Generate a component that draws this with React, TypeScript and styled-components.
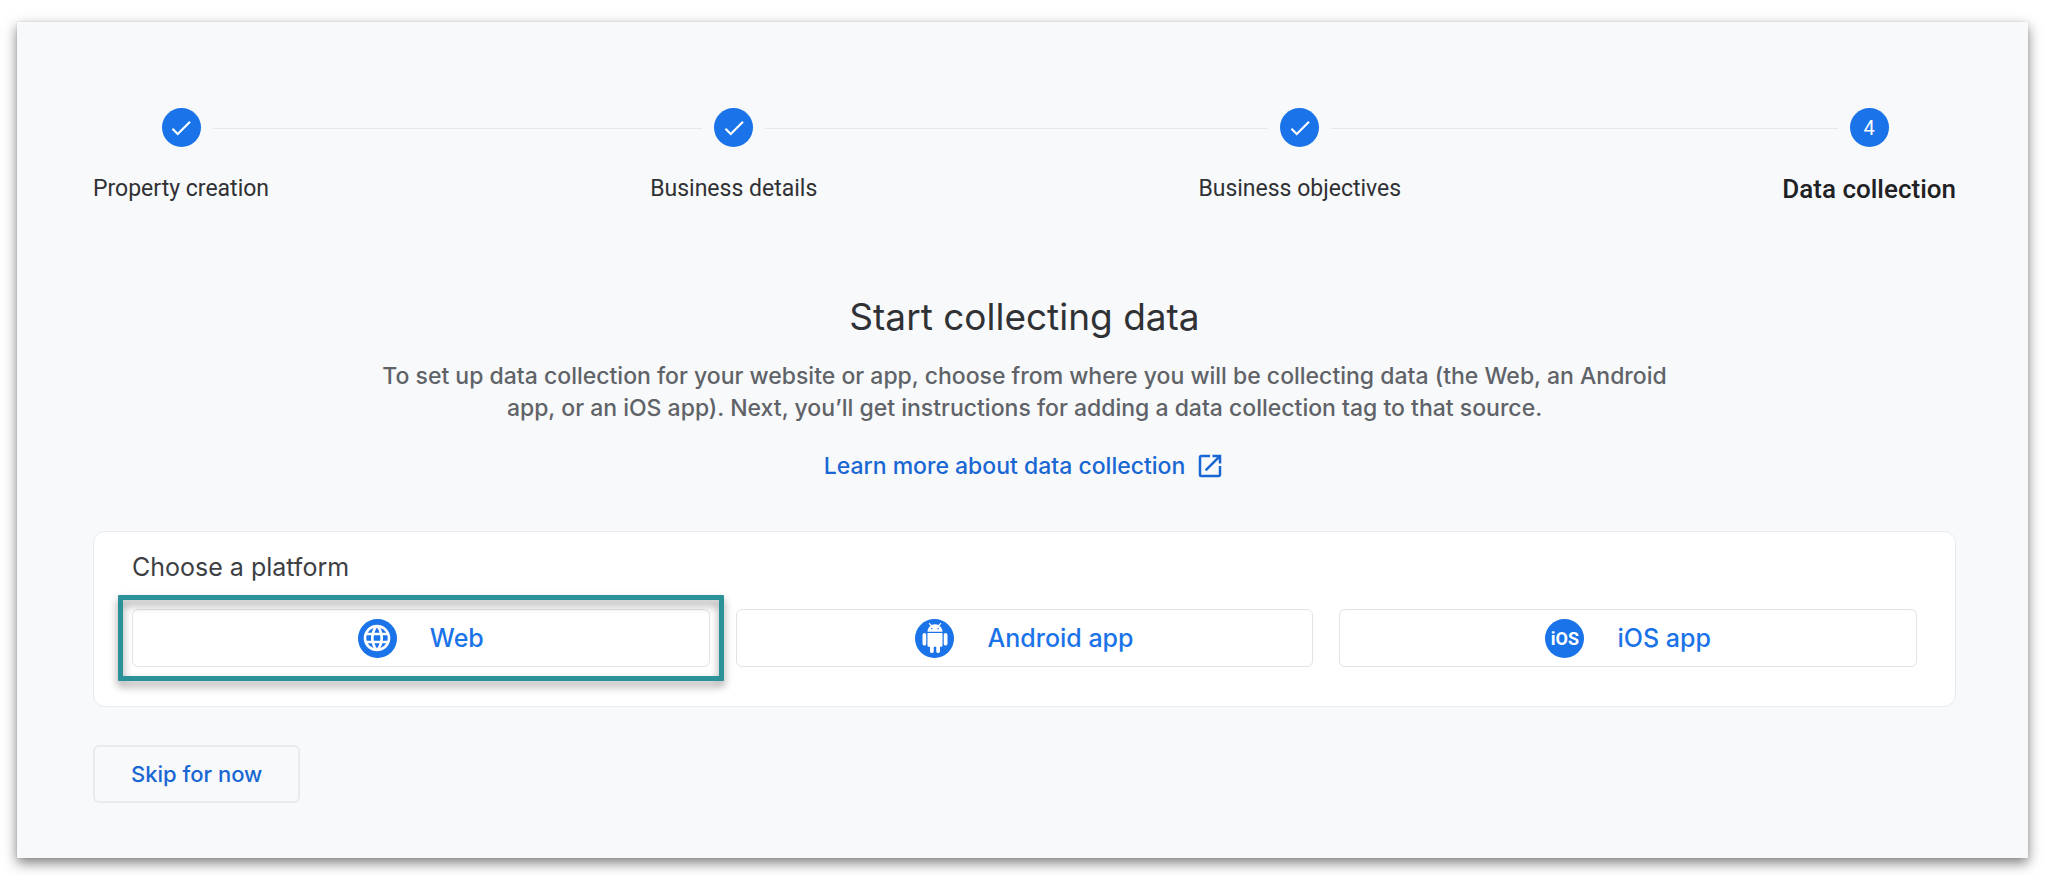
import React from 'react';
import styled, { createGlobalStyle } from 'styled-components';
import { MdCheck, MdLanguage, MdOpenInNew } from 'react-icons/md';

const GlobalStyle = createGlobalStyle`
  *, *::before, *::after { box-sizing: border-box; }
  body {
    margin: 0;
    background: #ffffff;
    font-family: Inter, "Liberation Sans", sans-serif;
  }
  h1, h2, p, ol { margin: 0; padding: 0; font-weight: 400; }
  button { font-family: inherit; cursor: pointer; }
`;

const Panel = styled.main`
  margin: 22px 18px 18px 17px;
  padding: 86px 72px 55px 76px;
  background: #f8f9fb;
  box-shadow: 0 5px 12px rgba(0, 0, 0, 0.5), 0 0 2px rgba(0, 0, 0, 0.1);
`;

const Stepper = styled.ol`
  display: flex;
  list-style: none;
`;

const StepItem = styled.li<{ $first: boolean }>`
  display: flex;
  flex: ${({ $first }) => ($first ? '0 0 auto' : '1 0 auto')};
`;

const Connector = styled.span`
  flex: 1;
  height: 1px;
  margin-top: 20px;
  background: #e6e8ea;
`;

const StepBody = styled.div`
  display: flex;
  flex-direction: column;
  gap: 26px;
`;

const Track = styled.div`
  display: flex;
  gap: 12px;
`;

const TrackLine = styled(Connector)<{ $hidden: boolean }>`
  visibility: ${({ $hidden }) => ($hidden ? 'hidden' : 'visible')};
`;

const Badge = styled.span`
  display: flex;
  flex: none;
  align-items: center;
  justify-content: center;
  width: 39px;
  height: 39px;
  border-radius: 50%;
  background: #1a73e8;
  color: #ffffff;
  font-family: Roboto, sans-serif;
  font-size: 20px;
`;

const StepLabel = styled.span<{ $current: boolean }>`
  color: ${({ $current }) => ($current ? '#202124' : '#303134')};
  font-family: Roboto, sans-serif;
  font-size: ${({ $current }) => ($current ? '26px' : '23px')};
  font-weight: ${({ $current }) => ($current ? 500 : 400)};
  line-height: 32px;
  white-space: nowrap;
`;

const Intro = styled.section`
  display: flex;
  flex-direction: column;
  align-items: center;
  margin-top: 88px;
  text-align: center;
`;

const Title = styled.h1`
  color: #303134;
  font-size: 37px;
  line-height: 48px;
`;

const Description = styled.p`
  max-width: 1310px;
  margin-top: 19px;
  color: #5f6368;
  font-size: 23px;
  font-weight: 500;
  line-height: 32px;
`;

const LearnMore = styled.a`
  display: flex;
  align-items: center;
  gap: 10px;
  margin-top: 26px;
  color: #1967d2;
  font-size: 23px;
  font-weight: 500;
  line-height: 32px;
  text-decoration: none;
`;

const Card = styled.section`
  margin-top: 49px;
  padding: 19px 38px 39px;
  border: 1px solid #e8eaed;
  border-radius: 12px;
  background: #ffffff;
`;

const CardTitle = styled.h2`
  color: #3c4043;
  font-size: 25px;
  line-height: 32px;
`;

const Platforms = styled.div`
  display: grid;
  grid-template-columns: repeat(3, 1fr);
  gap: 26px;
  margin-top: 26px;
`;

const PlatformButton = styled.button<{ $highlighted: boolean }>`
  position: relative;
  display: flex;
  align-items: center;
  justify-content: center;
  gap: 33px;
  height: 58px;
  padding: 0;
  border: 1px solid #e2e3e5;
  border-radius: 6px;
  background: #ffffff;
  color: #1a73e8;
  font-size: 25px;
  font-weight: 500;

  &::after {
    content: '';
    display: ${({ $highlighted }) => ($highlighted ? 'block' : 'none')};
    position: absolute;
    inset: -15px;
    border: 5px solid #2b9299;
    border-radius: 1px;
    filter: drop-shadow(0 5px 4px rgba(0, 0, 0, 0.4));
    pointer-events: none;
  }
`;

const IosMark = styled.span`
  font-size: 18px;
  font-weight: 700;
`;

const SkipButton = styled.button`
  height: 58px;
  margin-top: 38px;
  padding: 0 36px;
  border: 2px solid #e8eaed;
  border-radius: 6px;
  background: transparent;
  color: #1967d2;
  font-size: 22px;
  font-weight: 500;
`;

function AndroidIcon() {
  return (
    <svg width="30" height="30" viewBox="0 0 24 24" fill="currentColor">
      <path d="M6 18c0 .55.45 1 1 1h1v3.5c0 .83.67 1.5 1.5 1.5s1.5-.67 1.5-1.5V19h2v3.5c0 .83.67 1.5 1.5 1.5s1.5-.67 1.5-1.5V19h1c.55 0 1-.45 1-1V8H6v10z" />
      <path d="M3.5 8C2.67 8 2 8.67 2 9.5v7c0 .83.67 1.5 1.5 1.5S5 17.33 5 16.5v-7C5 8.67 4.33 8 3.5 8zm17 0c-.83 0-1.5.67-1.5 1.5v7c0 .83.67 1.5 1.5 1.5s1.5-.67 1.5-1.5v-7c0-.83-.67-1.5-1.5-1.5z" />
      <path d="M15.53 2.16l1.3-1.3c.2-.2.2-.51 0-.71-.2-.2-.51-.2-.71 0l-1.48 1.48C13.85 1.23 12.95 1 12 1c-.96 0-1.86.23-2.66.63L7.85.15c-.2-.2-.51-.2-.71 0-.2.2-.2.51 0 .71l1.31 1.31C6.97 3.26 6 5.01 6 7h12c0-1.99-.97-3.75-2.47-4.84zM10 5H9V4h1v1zm5 0h-1V4h1v1z" />
    </svg>
  );
}

const steps = [
  { label: 'Property creation', done: true },
  { label: 'Business details', done: true },
  { label: 'Business objectives', done: true },
  { label: 'Data collection', done: false },
];

const platforms = [
  { label: 'Web', icon: <MdLanguage size={32} />, highlighted: true },
  { label: 'Android app', icon: <AndroidIcon />, highlighted: false },
  { label: 'iOS app', icon: <IosMark>iOS</IosMark>, highlighted: false },
];

export default function App() {
  return (
    <>
      <GlobalStyle />
      <Panel>
        <Stepper>
          {steps.map(({ label, done }, index) => (
            <StepItem key={label} $first={index === 0} aria-current={done ? undefined : 'step'}>
              {index > 0 && <Connector />}
              <StepBody>
                <Track>
                  <TrackLine $hidden={index === 0} />
                  <Badge>{done ? <MdCheck size={26} /> : index + 1}</Badge>
                  <TrackLine $hidden={index === steps.length - 1} />
                </Track>
                <StepLabel $current={!done}>{label}</StepLabel>
              </StepBody>
            </StepItem>
          ))}
        </Stepper>

        <Intro>
          <Title>Start collecting data</Title>
          <Description>
            To set up data collection for your website or app, choose from where you will be
            collecting data (the Web, an Android app, or an iOS app). Next, you’ll get instructions
            for adding a data collection tag to that source.
          </Description>
          <LearnMore href="#learn-more">
            Learn more about data collection
            <MdOpenInNew size={30} />
          </LearnMore>
        </Intro>

        <Card>
          <CardTitle>Choose a platform</CardTitle>
          <Platforms>
            {platforms.map(({ label, icon, highlighted }) => (
              <PlatformButton key={label} type="button" $highlighted={highlighted}>
                <Badge aria-hidden="true">{icon}</Badge>
                {label}
              </PlatformButton>
            ))}
          </Platforms>
        </Card>

        <SkipButton type="button">Skip for now</SkipButton>
      </Panel>
    </>
  );
}
